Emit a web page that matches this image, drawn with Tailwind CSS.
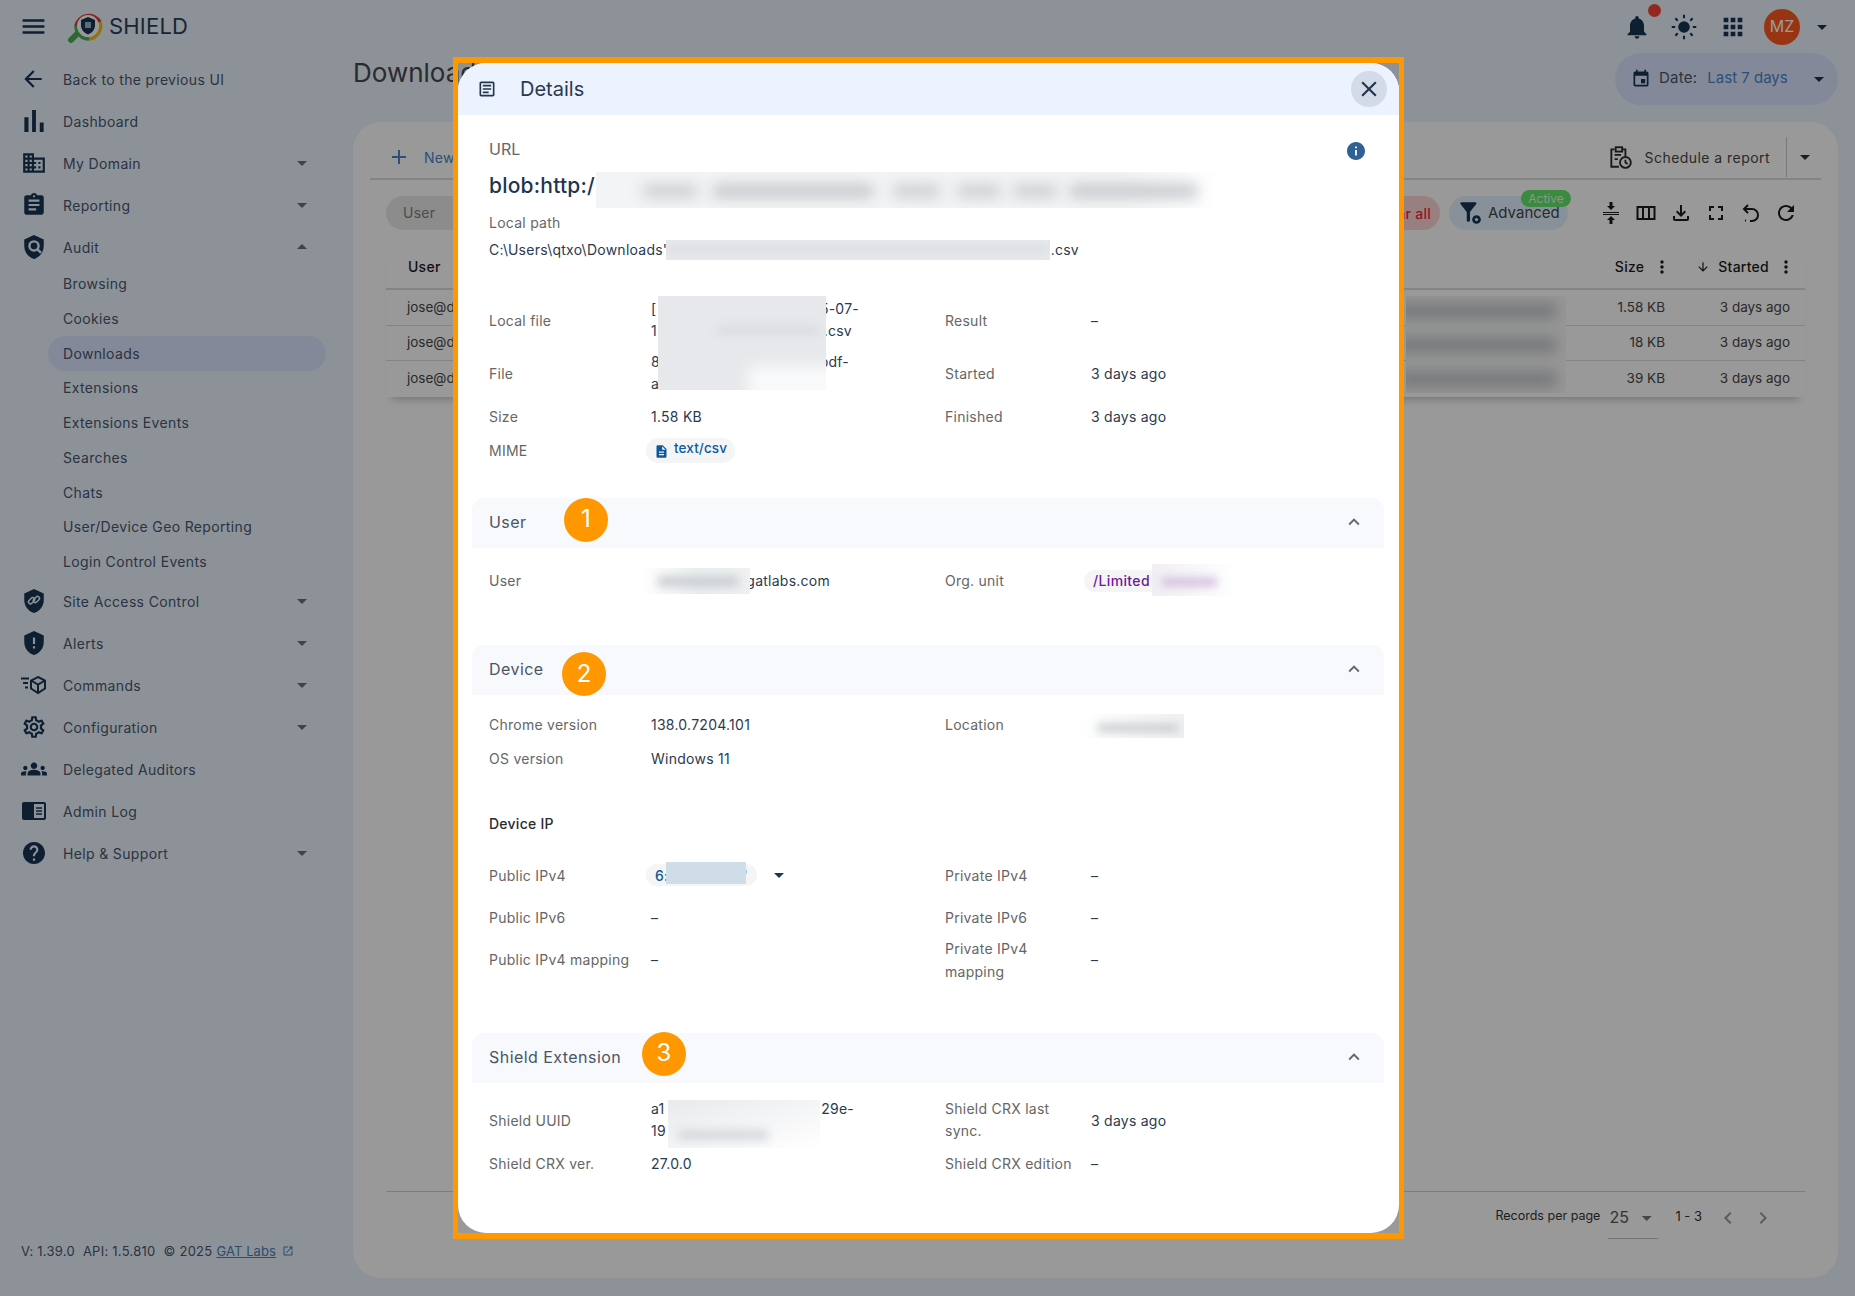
<!DOCTYPE html>
<html lang="en">
  <head>
    <meta charset="UTF-8" />
    <meta name="viewport" content="width=device-width, initial-scale=1.0" />
    <title>Shield - Downloads</title>
    <script src="https://cdn.jsdelivr.net/npm/@tailwindcss/browser@4"></script>
  </head>
  <body class="font-['Inter',sans-serif] text-[14px] tracking-[0.25px]">
    <div class="relative w-[1855px] h-[1296px] overflow-hidden bg-[#ebf3ff]">
      <!-- Top bar -->
      <header class="h-[53px] flex items-center text-[#173452]">
        <svg viewBox="0 0 24 24" class="ml-[19px] w-[29px] h-[29px] fill-current"><path d="M3 18h18v-2H3v2zm0-5h18v-2H3v2zm0-7v2h18V6H3z"/></svg>
        <svg viewBox="0 0 36 36" class="ml-[19px] w-[36px] h-[36px] shrink-0">
          <path d="M11 24 L4 31" stroke="#4caf50" stroke-width="6" stroke-linecap="round" fill="none"/>
          <path d="M9 17 A13 13 0 0 1 33 13" stroke="#e53935" stroke-width="3.5" fill="none"/>
          <path d="M33 13 A13 13 0 0 1 22 30" stroke="#f4c20d" stroke-width="3.5" fill="none"/>
          <path d="M22 30 A13 13 0 0 1 9 17" stroke="#4caf50" stroke-width="3.5" fill="none"/>
          <circle cx="21" cy="17" r="11" fill="#fff"/>
          <path d="M21 8l-7 3v5c0 4.5 3 8 7 9.5 4-1.500 7-5 7-9.500v-5z" fill="#173452"/>
          <rect x="18" y="13" width="6" height="6" fill="#9fb4c8"/>
        </svg>
        <span class="ml-[6px] mb-[1px] text-[22px] tracking-[0.2px] text-[#2b3f55]">SHIELD</span>
        <div class="ml-auto flex items-center">
          <div class="relative w-[24px] h-[34px] flex items-center justify-center">
            <svg viewBox="0 0 24 24" class="w-[28px] h-[28px] shrink-0 fill-current"><path d="M12 22c1.100 0 2-.9 2-2h-4c0 1.100.9 2 2 2zm6-6v-5c0-3.070-1.630-5.640-4.500-6.320V4c0-.83-.67-1.500-1.500-1.500s-1.500.67-1.500 1.500v.68C7.640 5.360 6 7.920 6 11v5l-2 2v1h16v-1l-2-2z"/></svg>
            <span class="absolute left-[23px] top-[-6px] w-[13px] h-[13px] rounded-full bg-[#f44336]"></span>
          </div>
          <svg viewBox="0 0 24 24" class="ml-[21px] w-[28px] h-[28px] fill-current"><circle cx="12" cy="12" r="5"/><path d="M12 1.500v3M12 19.500v3M1.500 12h3M19.500 12h3M4.600 4.600l2 2M17.400 17.400l2 2M4.600 19.400l2-2M17.400 6.600l2-2" stroke="currentColor" stroke-width="1.800" fill="none"/></svg>
          <svg viewBox="0 0 24 24" class="ml-[21px] w-[28px] h-[28px] fill-current"><path d="M4 8h4V4H4v4zm6 12h4v-4h-4v4zm-6 0h4v-4H4v4zm0-6h4v-4H4v4zm6 0h4v-4h-4v4zm6-10v4h4V4h-4zm-6 4h4V4h-4v4zm6 6h4v-4h-4v4zm0 6h4v-4h-4v4z"/></svg>
          <div class="ml-[17px] w-[36px] h-[36px] rounded-full bg-[#ff581e] text-white text-[16px] tracking-normal flex items-center justify-center pb-[2px]">MZ</div>
          <svg viewBox="0 0 24 24" class="ml-[10px] mr-[21px] w-[24px] h-[24px] fill-current"><path d="M7 10l5 5 5-5z"/></svg>
        </div>
      </header>

      <div class="flex">
        <!-- Sidebar -->
        <aside class="w-[353px] h-[1243px] shrink-0 relative text-[#48576b] tracking-[0.35px]">
          <nav class="pt-[5px]">
            <a class="flex items-center h-[42px]">
              <span class="w-[63px] flex justify-center text-[#173452] pl-[3px]"><svg viewBox="0 0 24 24" class="w-[26px] h-[26px] fill-current"><path d="M20 11H7.830l5.590-5.590L12 4l-8 8 8 8 1.410-1.410L7.830 13H20v-2z"/></svg></span>
              Back to the previous UI
            </a>
            <a class="flex items-center h-[42px]">
              <span class="w-[63px] flex justify-center text-[#173452] pl-[4px]"><svg viewBox="4 4 16 16" class="w-[22px] h-[22px] fill-current"><path d="M5 9.200h3V20H5zM10.600 4h2.800v16h-2.800zm5.600 9H19v7h-2.800z"/></svg></span>
              Dashboard
            </a>
            <a class="flex items-center h-[42px]">
              <span class="w-[63px] flex justify-center text-[#173452] pl-[4px]"><svg viewBox="0 0 24 24" class="w-[26px] h-[26px] fill-current"><path d="M12 7V3H2v18h20V7H12zM6 19H4v-2h2v2zm0-4H4v-2h2v2zm0-4H4V9h2v2zm0-4H4V5h2v2zm4 12H8v-2h2v2zm0-4H8v-2h2v2zm0-4H8V9h2v2zm0-4H8V5h2v2zm10 12h-8v-2h2v-2h-2v-2h2v-2h-2V9h8v10zm-2-8h-2v2h2v-2zm0 4h-2v2h2v-2z"/></svg></span>
              My Domain
              <svg viewBox="0 0 24 24" class="ml-auto mr-[39px] w-[24px] h-[24px] fill-[#6e6e6e]"><path d="M7 10l5 5 5-5z"/></svg>
            </a>
            <a class="flex items-center h-[42px]">
              <span class="w-[63px] flex justify-center text-[#173452] pl-[4px]"><svg viewBox="0 0 24 24" class="w-[26px] h-[26px] fill-current"><path d="M19 3h-4.180C14.400 1.840 13.300 1 12 1c-1.300 0-2.400.84-2.820 2H5c-1.100 0-2 .9-2 2v14c0 1.100.9 2 2 2h14c1.100 0 2-.9 2-2V5c0-1.100-.9-2-2-2zm-7 0c.55 0 1 .45 1 1s-.45 1-1 1-1-.45-1-1 .45-1 1-1zm2 14H7v-2h7v2zm3-4H7v-2h10v2zm0-4H7V7h10v2z"/></svg></span>
              Reporting
              <svg viewBox="0 0 24 24" class="ml-auto mr-[39px] w-[24px] h-[24px] fill-[#6e6e6e]"><path d="M7 10l5 5 5-5z"/></svg>
            </a>
            <a class="flex items-center h-[42px]">
              <span class="w-[63px] flex justify-center text-[#173452] pl-[4px]"><svg viewBox="0 0 24 24" class="w-[26px] h-[26px] fill-current"><path d="M12 1L3 5v6c0 5.550 3.840 10.740 9 12 5.160-1.260 9-6.450 9-12V5l-9-4z"/><circle cx="12" cy="11" r="4.200" fill="none" stroke="#ebf3ff" stroke-width="2.200"/><path d="M15 14l3.500 3.500" stroke="#ebf3ff" stroke-width="2.200"/></svg></span>
              Audit
              <svg viewBox="0 0 24 24" class="ml-auto mr-[39px] w-[24px] h-[24px] fill-[#6e6e6e]"><path d="M7 14l5-5 5 5z"/></svg>
            </a>
            <div class="mt-[-2px] mb-[1px] text-[14px]">
              <a class="flex items-center h-[34.750px] pl-[63px]">Browsing</a>
              <a class="flex items-center h-[34.750px] pl-[63px]">Cookies</a>
              <a class="flex items-center h-[35px] pl-[15px] ml-[48px] w-[278px] rounded-full bg-[#dae4fd]">Downloads</a>
              <a class="flex items-center h-[34.750px] pl-[63px]">Extensions</a>
              <a class="flex items-center h-[34.750px] pl-[63px]">Extensions Events</a>
              <a class="flex items-center h-[34.750px] pl-[63px]">Searches</a>
              <a class="flex items-center h-[34.750px] pl-[63px]">Chats</a>
              <a class="flex items-center h-[34.750px] pl-[63px]">User/Device Geo Reporting</a>
              <a class="flex items-center h-[34.750px] pl-[63px]">Login Control Events</a>
            </div>
            <a class="flex items-center h-[42px]">
              <span class="w-[63px] flex justify-center text-[#173452] pl-[4px]"><svg viewBox="0 0 24 24" class="w-[26px] h-[26px] fill-current"><path d="M12 1L3 5v6c0 5.550 3.840 10.740 9 12 5.160-1.260 9-6.450 9-12V5l-9-4z"/><rect x="6.500" y="10" width="6.500" height="3.600" rx="1.800" transform="rotate(-45 9.700 11.800)" fill="none" stroke="#ebf3ff" stroke-width="1.400"/><rect x="11" y="8.800" width="6.500" height="3.600" rx="1.800" transform="rotate(-45 14.200 10.600)" fill="none" stroke="#ebf3ff" stroke-width="1.400"/></svg></span>
              Site Access Control
              <svg viewBox="0 0 24 24" class="ml-auto mr-[39px] w-[24px] h-[24px] fill-[#6e6e6e]"><path d="M7 10l5 5 5-5z"/></svg>
            </a>
            <a class="flex items-center h-[42px]">
              <span class="w-[63px] flex justify-center text-[#173452] pl-[4px]"><svg viewBox="0 0 24 24" class="w-[26px] h-[26px] fill-current"><path d="M12 1L3 5v6c0 5.550 3.840 10.740 9 12 5.160-1.260 9-6.450 9-12V5l-9-4zm1 16h-2v-2h2v2zm0-4h-2V7h2v6z"/></svg></span>
              Alerts
              <svg viewBox="0 0 24 24" class="ml-auto mr-[39px] w-[24px] h-[24px] fill-[#6e6e6e]"><path d="M7 10l5 5 5-5z"/></svg>
            </a>
            <a class="flex items-center h-[42px]">
              <span class="w-[63px] flex justify-center text-[#173452] pl-[4px]"><svg viewBox="0 0 26 20" class="w-[26px] h-[20px] fill-none stroke-current"><path d="M17 2l7 3.500v8L17 18l-7-4.500v-8zM10 5.500l7 4 7-4M17 9.500V18" stroke-width="2"/><path d="M0 3.500h8M2 8h5M4 12.500h3" stroke-width="2"/></svg></span>
              Commands
              <svg viewBox="0 0 24 24" class="ml-auto mr-[39px] w-[24px] h-[24px] fill-[#6e6e6e]"><path d="M7 10l5 5 5-5z"/></svg>
            </a>
            <a class="flex items-center h-[42px]">
              <span class="w-[63px] flex justify-center text-[#173452] pl-[4px]"><svg viewBox="0 0 24 24" class="w-[26px] h-[26px] fill-current"><path d="M19.430 12.980c.04-.32.07-.64.07-.98 0-.34-.03-.66-.07-.98l2.110-1.650c.19-.15.24-.42.12-.64l-2-3.460c-.09-.16-.26-.25-.44-.25-.06 0-.12.01-.17.03l-2.490 1c-.52-.4-1.080-.73-1.690-.98l-.38-2.650C14.460 2.180 14.250 2 14 2h-4c-.25 0-.46.18-.49.42l-.38 2.650c-.61.25-1.170.59-1.690.98l-2.490-1c-.06-.02-.12-.03-.18-.03-.17 0-.34.09-.43.25l-2 3.460c-.13.22-.07.49.12.64l2.110 1.650c-.04.32-.07.65-.07.98 0 .33.03.66.07.98l-2.110 1.650c-.19.15-.24.42-.12.64l2 3.460c.09.16.26.25.44.25.06 0 .12-.01.17-.03l2.490-1c.52.4 1.080.73 1.690.98l.38 2.650c.03.24.24.42.49.42h4c.25 0 .46-.18.49-.42l.38-2.650c.61-.25 1.170-.59 1.690-.98l2.490 1c.06.02.12.03.18.03.17 0 .34-.09.43-.25l2-3.460c.12-.22.07-.49-.12-.64l-2.110-1.650zm-1.980-1.710c.04.31.05.52.05.73 0 .21-.02.43-.05.73l-.14 1.130.89.7 1.080.84-.7 1.210-1.270-.51-1.040-.42-.9.68c-.43.32-.84.56-1.250.73l-1.060.43-.16 1.130-.2 1.350h-1.400l-.19-1.350-.16-1.130-1.060-.43c-.43-.18-.83-.41-1.230-.71l-.91-.7-1.060.43-1.270.51-.7-1.210 1.080-.84.89-.7-.14-1.130c-.03-.31-.05-.54-.05-.74s.02-.43.05-.73l.14-1.130-.89-.7-1.080-.84.7-1.210 1.270.51 1.040.42.9-.68c.43-.32.84-.56 1.250-.73l1.060-.43.16-1.130.2-1.350h1.390l.19 1.350.16 1.130 1.060.43c.43.18.83.41 1.230.71l.91.7 1.060-.43 1.270-.51.7 1.210-1.070.85-.89.7.14 1.130zM12 8c-2.210 0-4 1.790-4 4s1.790 4 4 4 4-1.790 4-4-1.790-4-4-4zm0 6c-1.100 0-2-.9-2-2s.9-2 2-2 2 .9 2 2-.9 2-2 2z"/></svg></span>
              Configuration
              <svg viewBox="0 0 24 24" class="ml-auto mr-[39px] w-[24px] h-[24px] fill-[#6e6e6e]"><path d="M7 10l5 5 5-5z"/></svg>
            </a>
            <a class="flex items-center h-[42px]">
              <span class="w-[63px] flex justify-center text-[#173452] pl-[4px]"><svg viewBox="0 0 24 24" class="w-[26px] h-[26px] fill-current"><path d="M12 12.750c1.630 0 3.070.39 4.240.9 1.080.48 1.760 1.560 1.760 2.740V18H6v-1.610c0-1.180.68-2.260 1.760-2.740 1.170-.52 2.610-.9 4.240-.9zM4 13c1.100 0 2-.9 2-2s-.9-2-2-2-2 .9-2 2 .9 2 2 2zm1.130 1.100c-.37-.06-.74-.1-1.130-.1-.99 0-1.930.21-2.780.58C.48 14.900 0 15.620 0 16.430V18h4.500v-1.610c0-.83.23-1.610.63-2.290zM20 13c1.100 0 2-.9 2-2s-.9-2-2-2-2 .9-2 2 .9 2 2 2zm4 3.430c0-.81-.48-1.530-1.220-1.850-.85-.37-1.790-.58-2.780-.58-.39 0-.76.04-1.130.1.4.68.63 1.460.63 2.290V18H24v-1.570zM12 6c1.660 0 3 1.340 3 3s-1.340 3-3 3-3-1.340-3-3 1.340-3 3-3z"/></svg></span>
              Delegated Auditors
            </a>
            <a class="flex items-center h-[42px]">
              <span class="w-[63px] flex justify-center text-[#173452] pl-[4px]"><svg viewBox="0 0 24 18" class="w-[24px] h-[18px]"><rect width="24" height="18" rx="2" fill="currentColor"/><rect x="12" y="2" width="10" height="14" fill="#ebf3ff"/><path d="M14 6h6M14 9h6M14 12h6" stroke="currentColor" stroke-width="1.300"/></svg></span>
              Admin Log
            </a>
            <a class="flex items-center h-[42px]">
              <span class="w-[63px] flex justify-center text-[#173452] pl-[4px]"><svg viewBox="2 2 20 20" class="w-[22px] h-[22px] fill-current"><path d="M12 2C6.480 2 2 6.480 2 12s4.480 10 10 10 10-4.480 10-10S17.520 2 12 2zm1 17h-2v-2h2v2zm2.070-7.750l-.9.92C13.450 12.900 13 13.500 13 15h-2v-.5c0-1.100.45-2.100 1.170-2.830l1.240-1.260c.37-.36.59-.86.59-1.410 0-1.100-.9-2-2-2s-2 .9-2 2H8c0-2.210 1.790-4 4-4s4 1.790 4 4c0 .88-.36 1.680-.93 2.250z"/></svg></span>
              Help &amp; Support
              <svg viewBox="0 0 24 24" class="ml-auto mr-[39px] w-[24px] h-[24px] fill-[#6e6e6e]"><path d="M7 10l5 5 5-5z"/></svg>
            </a>
          </nav>
          <footer class="absolute left-[21px] top-[1188px] flex items-center gap-[8px] text-[13px] tracking-[0.25px] leading-[20px] text-[#48576b]">
            <span>V: 1.39.0</span><span>API: 1.5.810</span>
            <span class="flex items-center gap-[4px]">© 2025
              <a class="text-[#4b7fb8] underline tracking-[0.1px]">GAT Labs</a>
              <svg viewBox="0 0 24 24" class="ml-[2px] w-[12px] h-[12px] fill-[#4b7fb8]"><path d="M19 19H5V5h7V3H5c-1.110 0-2 .9-2 2v14c0 1.100.89 2 2 2h14c1.100 0 2-.9 2-2v-7h-2v7zM14 3v2h3.590l-9.830 9.830 1.410 1.410L19 6.410V10h2V3h-7z"/></svg>
            </span>
          </footer>
        </aside>

        <!-- Main -->
        <main class="flex-1 pr-[17px]">
          <div class="h-[69px] flex justify-between items-start">
            <h1 class="text-[26px] tracking-normal leading-[40px] text-[#484848]">Downloads</h1>
            <div class="w-[223px] h-[52px] rounded-full bg-[#dae4fd] flex items-center text-[15px] text-[#48576b] pb-[1px]">
              <svg viewBox="0 0 24 24" class="ml-[16px] w-[20px] h-[20px] fill-[#173452]"><path d="M17 12h-5v5h5v-5zM16 1v2H8V1H6v2H5c-1.110 0-1.990.9-1.990 2L3 19c0 1.100.89 2 2 2h14c1.100 0 2-.9 2-2V5c0-1.100-.9-2-2-2h-1V1h-2zm3 18H5V8h14v11z"/></svg>
              <span class="ml-[8px]">Date:</span>
              <span class="ml-[10px] tracking-normal text-[#4b85c8]">Last 7 days</span>
              <svg viewBox="0 0 24 24" class="ml-[19px] w-[24px] h-[24px] fill-[#173452]"><path d="M7 10l5 5 5-5z"/></svg>
            </div>
          </div>

          <section class="h-[1156px] rounded-[28px] bg-white px-[17px] text-[#464646]">
            <!-- Tabs row -->
            <div class="h-[58px] border-b-2 border-[#dcdcdc] flex items-center pt-[14px]">
              <svg viewBox="0 0 24 24" class="ml-[17px] w-[24px] h-[24px] fill-[#4b85c8]"><path d="M19 13h-6v6h-2v-6H5v-2h6V5h2v6h6v2z"/></svg>
              <span class="ml-[13px] text-[#4b85c8]">New</span>
              <div class="ml-auto flex items-center h-[40px]">
                <svg viewBox="0 0 24 24" class="w-[26px] h-[26px] fill-none stroke-[#2a2a2a]" stroke-width="1.700"><path d="M17 11V5h-3M7 5H4v16h7"/><rect x="8" y="3" width="6" height="4"/><path d="M7 10h6M7 14h3"/><circle cx="17" cy="17" r="5"/><path d="M17 14.500V17l2 1.500"/></svg>
                <span class="ml-[12px] tracking-[0.45px]">Schedule a report</span>
                <span class="ml-[16px] w-px h-[40px] bg-[#c8c8c8]"></span>
                <svg viewBox="0 0 24 24" class="ml-[6px] mr-[4px] w-[24px] h-[24px] fill-[#333]"><path d="M7 10l5 5 5-5z"/></svg>
              </div>
            </div>
            <!-- Filters row -->
            <div class="mt-[16px] h-[34px] flex items-center pl-[16px] pr-[23px]">
              <span class="h-[34px] rounded-full bg-[#e9e9e9] px-[17px] flex items-center text-[#808080] w-[120px] pb-[1px]">User</span>
              <span class="ml-auto h-[34px] pl-[12px] pr-[9px] rounded-full bg-[#ffd6d6] flex items-center font-medium text-[#ff1a40]">Clear all</span>
              <span class="relative ml-[9px] h-[34px] w-[119px] rounded-full bg-[#e3f2ff] flex items-center text-[15px] tracking-normal text-[#464646]">
                <svg viewBox="0 0 24 24" class="ml-[8px] w-[26px] h-[26px] fill-[#173452]"><path d="M3.250 3.610C5.270 6.200 9 11 9 11v8c0 .55.45 1 1 1h1c.55 0 1-.45 1-1v-8s3.720-4.800 5.740-7.390c.51-.66.04-1.610-.79-1.610H4.040c-.83 0-1.300.95-.79 1.610z"/><circle cx="18" cy="18" r="4"/><circle cx="18" cy="18" r="1.500" fill="#e3f2ff"/></svg>
                <span class="ml-[5px]">Advanced</span>
                <span class="absolute left-[72px] top-[-6px] h-[17px] w-[50px] rounded-full bg-[#62e669] text-[#dcffe0] text-[12px] tracking-normal flex items-center justify-center">Active</span>
              </span>
              <div class="ml-[31px] flex items-center gap-[11px] text-[#1c1c1c]">
                <svg viewBox="0 0 24 24" class="w-[24px] h-[24px] fill-current"><path d="M4 11h16v1H4zM4 13h16v1H4zM10.500 1v4H8l4 4 4-4h-2.500V1zM12 15l-4 4h2.500v4h3v-4H16z"/></svg>
                <svg viewBox="0 0 24 24" class="w-[24px] h-[24px] fill-none stroke-current" stroke-width="2"><rect x="3.500" y="6" width="17" height="12"/><path d="M9 6v12M15 6v12"/></svg>
                <svg viewBox="0 0 24 24" class="w-[24px] h-[24px] fill-current"><path d="M18 15v3H6v-3H4v3c0 1.100.9 2 2 2h12c1.100 0 2-.9 2-2v-3h-2zm-1-4l-1.410-1.410L13 12.170V4h-2v8.170L8.410 9.590 7 11l5 5 5-5z"/></svg>
                <svg viewBox="0 0 24 24" class="w-[24px] h-[24px] fill-current"><path d="M7 14H5v5h5v-2H7v-3zm-2-4h2V7h3V5H5v5zm12 7h-3v2h5v-5h-2v3zM14 5v2h3v3h2V5h-5z"/></svg>
                <svg viewBox="0 0 24 24" class="w-[24px] h-[24px] fill-none stroke-current" stroke-width="2"><path d="M9 4L5 8l4 4"/><path d="M5 8h8a6 6 0 0 1 0 12h-2M6 19.500h1"/></svg>
                <svg viewBox="0 0 24 24" class="w-[24px] h-[24px] fill-current"><path d="M17.650 6.350C16.200 4.900 14.210 4 12 4c-4.420 0-7.990 3.580-7.990 8s3.570 8 7.990 8c3.730 0 6.840-2.550 7.730-6h-2.080c-.82 2.330-3.040 4-5.650 4-3.310 0-6-2.690-6-6s2.690-6 6-6c1.660 0 3.140.69 4.220 1.780L13 11h7V4l-2.350 2.350z"/></svg>
              </div>
            </div>
            <!-- Table -->
            <div class="relative mx-[16px] mt-[16px] shadow-[0_8px_8px_-6px_rgba(0,0,0,0.25)]">
              <div class="h-[44px] pb-[1px] border-b-2 border-[#dcdcdc] flex items-center text-[#1c1c1c] font-medium">
                <span class="ml-[22px]">User</span>
                <span class="ml-auto">Size</span>
                <svg viewBox="0 0 24 24" class="ml-[8px] w-[20px] h-[20px] fill-current"><path d="M12 8c1.100 0 2-.9 2-2s-.9-2-2-2-2 .9-2 2 .9 2 2 2zm0 2c-1.100 0-2 .9-2 2s.9 2 2 2 2-.9 2-2-.9-2-2-2zm0 6c-1.100 0-2 .9-2 2s.9 2 2 2 2-.9 2-2-.9-2-2-2z"/></svg>
                <svg viewBox="0 0 24 24" class="ml-[24px] w-[14px] h-[14px] fill-current"><path d="M20 12l-1.410-1.410L13 16.170V4h-2v12.170l-5.580-5.590L4 12l8 8 8-8z"/></svg>
                <span class="ml-[8px]">Started</span>
                <svg viewBox="0 0 24 24" class="ml-[7px] mr-[9px] w-[20px] h-[20px] fill-current"><path d="M12 8c1.100 0 2-.9 2-2s-.9-2-2-2-2 .9-2 2 .9 2 2 2zm0 2c-1.100 0-2 .9-2 2s.9 2 2 2 2-.9 2-2-.9-2-2-2zm0 6c-1.100 0-2 .9-2 2s.9 2 2 2 2-.9 2-2-.9-2-2-2z"/></svg>
              </div>
              <div class="h-[35.500px] pb-[1px] border-b border-[#dcdcdc] flex items-center text-[13.500px] tracking-normal"><span class="ml-[21px]">jose@do</span><span class="ml-auto">1.58 KB</span><span class="w-[125px] mr-[15px] text-right">3 days ago</span></div>
              <div class="h-[35.500px] pb-[1px] border-b border-[#dcdcdc] flex items-center text-[13.500px] tracking-normal"><span class="ml-[21px]">jose@do</span><span class="ml-auto">18 KB</span><span class="w-[125px] mr-[15px] text-right">3 days ago</span></div>
              <div class="h-[36px] pb-[1px] flex items-center text-[13.500px] tracking-normal"><span class="ml-[21px]">jose@do</span><span class="ml-auto">39 KB</span><span class="w-[125px] mr-[15px] text-right">3 days ago</span></div>
              <div class="absolute left-[1020px] top-[50px] w-[160px] h-[97px] bg-[#fafafa] overflow-hidden">
                <div class="absolute left-[-10px] top-[8px] w-[160px] h-[14px] bg-gray-500/40 blur-[7px]"></div>
                <div class="absolute left-[-10px] top-[42px] w-[160px] h-[14px] bg-gray-500/40 blur-[7px]"></div>
                <div class="absolute left-[-10px] top-[76px] w-[160px] h-[14px] bg-gray-500/40 blur-[7px]"></div>
              </div>
            </div>
            <!-- Pagination -->
            <div class="mt-[794px] border-t border-[#d0d0d0] mx-[16px] flex items-start pt-[14px] pr-[30px] justify-end text-[12.500px] tracking-normal text-[#333]">
              <span class="mt-[1px]">Records per page</span>
              <div class="ml-[8px] w-[50px] h-[33px] border-b border-[#c0c0c0] flex items-start">
                <span class="text-[16px] text-[#555] mt-[-1px] ml-[1px]">25</span>
                <svg viewBox="0 0 24 24" class="ml-[6px] w-[24px] h-[24px] fill-[#777]"><path d="M7 10l5 5 5-5z"/></svg>
              </div>
              <span class="ml-[17px] mt-[1px] text-[13px]">1 - 3</span>
              <svg viewBox="0 0 24 24" class="ml-[14px] w-[24px] h-[24px] fill-[#999]"><path d="M15.410 7.410L14 6l-6 6 6 6 1.410-1.410L10.830 12z"/></svg>
              <svg viewBox="0 0 24 24" class="ml-[11px] w-[24px] h-[24px] fill-[#999]"><path d="M10 6L8.590 7.410 13.170 12l-4.580 4.590L10 18l6-6z"/></svg>
            </div>
          </section>
        </main>
      </div>

      <!-- Backdrop -->
      <div class="absolute inset-0 bg-black/40"></div>

      <!-- Details dialog with orange highlight frame -->
      <div class="absolute left-[453px] top-[57px] w-[951px] h-[1182px] border-x-[5px] border-y-[6px] border-[#ff9800]">
        <div class="relative w-[941px] h-[1170px] rounded-[28px] bg-white overflow-hidden text-[#2a3a4f]">
          <div class="h-[52px] bg-[#ecf2fe] flex items-center pr-[12px]">
            <svg viewBox="0 0 24 24" class="ml-[19px] w-[20px] h-[20px] fill-[#22364d]"><path d="M19 5v14H5V5h14m0-2H5c-1.100 0-2 .9-2 2v14c0 1.100.9 2 2 2h14c1.100 0 2-.9 2-2V5c0-1.100-.9-2-2-2z"/><path d="M14 17H7v-2h7v2zm3-4H7v-2h10v2zm0-4H7V7h10v2z"/></svg>
            <span class="ml-[23px] text-[20px] tracking-normal text-[#2a3a4f]">Details</span>
            <button class="ml-auto w-[36px] h-[36px] rounded-full bg-[#d4dbe8] flex items-center justify-center">
              <svg viewBox="0 0 24 24" class="w-[26px] h-[26px] fill-[#22364d]"><path d="M19 6.410L17.590 5 12 10.590 6.410 5 5 6.410 10.590 12 5 17.590 6.410 19 12 13.410 17.590 19 19 17.590 13.410 12z"/></svg>
            </button>
          </div>

          <div class="pl-[31px]">
            <div class="mt-[22px] h-[24px] leading-[24px] flex items-center text-[16px] tracking-normal text-[#666]">URL
              <svg viewBox="2 2 20 20" class="ml-auto mr-[34px] mt-[4px] w-[18px] h-[18px] fill-[#2f6195]"><path d="M12 2C6.480 2 2 6.480 2 12s4.480 10 10 10 10-4.480 10-10S17.520 2 12 2zm1 15h-2v-6h2v6zm0-8h-2V7h2v2z"/></svg>
            </div>
            <div class="mt-[10px] h-[30px] leading-[30px] text-[21px] tracking-[0.2px] font-medium text-[#1e3550]">blob:http:/</div>
            <div class="mt-[10px] h-[24px] leading-[24px] text-[#666]">Local path</div>
            <div class="mt-[3px] h-[24px] leading-[24px] w-[590px] flex justify-between text-[#2a3a4f]"><span>C:\Users\qtxo\Downloads'</span><span>.csv</span></div>
          </div>

          <div class="mt-[31.500px] pl-[31px]">
            <div class="flex h-[53px] items-center">
              <div class="flex items-center w-[456px]"><span class="w-[162px] text-[#666]">Local file</span><div class="leading-[22.500px]"><div class="w-[208px] flex justify-between"><span>[</span><span>5-07-</span></div><div class="w-[201px] flex justify-between"><span>1</span><span>.csv</span></div></div></div>
              <span class="w-[146px] text-[#666]">Result</span><span>–</span>
            </div>
            <div class="flex h-[53px] items-center">
              <div class="flex items-center w-[456px]"><span class="w-[162px] text-[#666]">File</span><div class="leading-[22.500px]"><div class="w-[198px] flex justify-between"><span>8</span><span>pdf-</span></div><div>a</div></div></div>
              <span class="w-[146px] text-[#666]">Started</span><span>3 days ago</span>
            </div>
            <div class="flex h-[34px] items-center">
              <div class="flex items-center w-[456px]"><span class="w-[162px] text-[#666]">Size</span><span>1.58 KB</span></div>
              <span class="w-[146px] text-[#666]">Finished</span><span>3 days ago</span>
            </div>
            <div class="flex h-[34px] items-center">
              <span class="w-[157px] text-[#666]">MIME</span>
              <span class="h-[25px] w-[89px] rounded-full bg-[#f5f5f5] flex items-center pl-[8px] text-[13.500px] tracking-[0.1px] font-medium text-[#0b5a9e] pb-[4px]">
                <svg viewBox="0 0 24 24" class="w-[15px] h-[15px] mt-[6px] mr-[5px] shrink-0 fill-[#0b5a9e]"><path d="M14 2H6c-1.100 0-1.990.9-1.990 2L4 20c0 1.100.89 2 1.990 2H18c1.100 0 2-.9 2-2V8l-6-6zm2 16H8v-2h8v2zm0-4H8v-2h8v2zm-3-5V3.500L18.500 9H13z"/></svg>
                text/csv
              </span>
            </div>
          </div>

          <!-- User -->
          <div class="mt-[30px] ml-[14px] mr-[15px] h-[50px] rounded-t-[12px] bg-[#f7f9fd] flex items-center pl-[17px] pr-[19px] pb-[2px] text-[16px] tracking-[0.45px] text-[#4b5563]">User
            <svg viewBox="0 0 24 24" class="ml-auto mt-[1px] w-[22px] h-[22px] fill-[#666]"><path d="M12 8l-6 6 1.410 1.410L12 10.830l4.590 4.580L18 14z"/></svg>
          </div>
          <div class="pl-[31px] mt-[16px] flex h-[34px] items-center">
            <div class="flex items-center w-[456px]"><span class="w-[162px] text-[#666]">User</span><span class="w-[179px] text-right">gatlabs.com</span></div>
            <span class="w-[139px] text-[#666]">Org. unit</span>
            <span class="h-[22px] w-[90px] rounded-l-full bg-[#f5f5f5] flex items-center pl-[9px] tracking-[0.35px] font-medium text-[#6a1b9a]">/Limited</span>
          </div>

          <!-- Device -->
          <div class="mt-[47px] ml-[14px] mr-[15px] h-[50px] rounded-t-[12px] bg-[#f7f9fd] flex items-center pl-[17px] pr-[19px] pb-[2px] text-[16px] tracking-[0.45px] text-[#4b5563]">Device
            <svg viewBox="0 0 24 24" class="ml-auto mt-[1px] w-[22px] h-[22px] fill-[#666]"><path d="M12 8l-6 6 1.410 1.410L12 10.830l4.590 4.580L18 14z"/></svg>
          </div>
          <div class="pl-[31px] mt-[13px]">
            <div class="flex h-[34px] items-center">
              <div class="flex items-center w-[456px]"><span class="w-[162px] text-[#666]">Chrome version</span><span>138.0.7204.101</span></div>
              <span class="text-[#666]">Location</span>
            </div>
            <div class="flex h-[34px] items-center">
              <span class="w-[162px] text-[#666]">OS version</span><span>Windows 11</span>
            </div>
            <div class="mt-[36.500px] h-[24px] leading-[24px] font-medium text-[#2b2b2b]">Device IP</div>
            <div class="mt-[14px] flex h-[50px] items-center">
              <div class="flex items-center w-[456px]"><span class="w-[157px] text-[#666]">Public IPv4</span>
                <span class="h-[22px] w-[111px] rounded-full bg-[#f5f5f5] flex items-center justify-between px-[9px] font-medium text-[#0b5a9e]"><span>6:</span><span>'</span></span>
                <svg viewBox="0 0 24 24" class="ml-[10px] w-[24px] h-[24px] fill-[#22364d]"><path d="M7 10l5 5 5-5z"/></svg>
              </div>
              <span class="w-[146px] text-[#666]">Private IPv4</span><span>–</span>
            </div>
            <div class="flex h-[34px] items-center">
              <div class="flex items-center w-[456px]"><span class="w-[162px] text-[#666]">Public IPv6</span><span>–</span></div>
              <span class="w-[146px] text-[#666]">Private IPv6</span><span>–</span>
            </div>
            <div class="flex h-[53px] items-center">
              <div class="flex items-center w-[456px] mb-[3px]"><span class="w-[162px] text-[#666]">Public IPv4 mapping</span><span>–</span></div>
              <span class="w-[146px] text-[#666] leading-[22.500px]">Private IPv4 mapping</span><span class="mb-[3px]">–</span>
            </div>
          </div>

          <!-- Shield Extension -->
          <div class="mt-[45.500px] ml-[14px] mr-[15px] h-[50px] rounded-t-[12px] bg-[#f7f9fd] flex items-center pl-[17px] pr-[19px] pb-[2px] text-[16px] tracking-[0.45px] text-[#4b5563]">Shield Extension
            <svg viewBox="0 0 24 24" class="ml-auto mt-[1px] w-[22px] h-[22px] fill-[#666]"><path d="M12 8l-6 6 1.410 1.410L12 10.830l4.590 4.580L18 14z"/></svg>
          </div>
          <div class="pl-[31px] mt-[11px]">
            <div class="flex h-[53px] items-center">
              <div class="flex items-center w-[456px]"><span class="w-[162px] text-[#666]">Shield UUID</span><div class="leading-[22.500px]"><div class="w-[203px] flex justify-between"><span>a1</span><span>29e-</span></div><div>19</div></div></div>
              <span class="w-[146px] pr-[20px] text-[#666] leading-[22.500px]">Shield CRX last sync.</span><span>3 days ago</span>
            </div>
            <div class="flex h-[34px] items-center">
              <div class="flex items-center w-[456px]"><span class="w-[162px] text-[#666]">Shield CRX ver.</span><span>27.0.0</span></div>
              <span class="w-[146px] text-[#666]">Shield CRX edition</span><span>–</span>
            </div>
          </div>

          <!-- Redaction blurs laid over the values -->
          <div class="absolute left-[138px] top-[109px] w-[624px] h-[36px] overflow-hidden bg-gradient-to-r from-[#f3f4f5] from-85% to-white">
            <div class="absolute left-[47px] top-[12px] w-[54px] h-[14px] bg-[#cdd0d4] blur-[7px]"></div>
            <div class="absolute left-[117px] top-[12px] w-[160px] h-[14px] bg-[#c6c9ce] blur-[7px]"></div>
            <div class="absolute left-[297px] top-[12px] w-[47px] h-[14px] bg-[#cdd0d4] blur-[7px]"></div>
            <div class="absolute left-[361px] top-[12px] w-[43px] h-[14px] bg-[#cdd0d4] blur-[7px]"></div>
            <div class="absolute left-[417px] top-[12px] w-[44px] h-[14px] bg-[#cdd0d4] blur-[7px]"></div>
            <div class="absolute left-[474px] top-[12px] w-[127px] h-[14px] bg-[#c6c9ce] blur-[7px]"></div>
          </div>
          <div class="absolute left-[208px] top-[177px] w-[384px] h-[20px] overflow-hidden bg-[#e8eaec]">
            <div class="absolute left-0 top-[4px] w-[384px] h-[10px] bg-[#dcdfe3] blur-[5px]"></div>
          </div>
          <div class="absolute left-[200px] top-[233px] w-[168px] h-[94px] overflow-hidden bg-[#e6e8eb]">
            <div class="absolute left-[60px] top-[30px] w-[100px] h-[8px] bg-[#d8dbdf] blur-[4px]"></div>
            <div class="absolute left-[90px] top-[70px] w-[90px] h-[34px] bg-white/80 blur-[8px]"></div>
          </div>
          <div class="absolute left-[185px] top-[505px] w-[107px] h-[26px] overflow-hidden bg-gradient-to-r from-white via-[#eceeef] to-[#eef0f1]">
            <div class="absolute left-[15px] top-[9px] w-[80px] h-[9px] bg-[#c4c9ce] blur-[5px]"></div>
          </div>
          <div class="absolute left-[694px] top-[501px] w-[83px] h-[32px] overflow-hidden bg-gradient-to-r from-[#f0eef2] to-white">
            <div class="absolute left-[10px] top-[14px] w-[55px] h-[8px] bg-[#cfbcdc] blur-[4px]"></div>
          </div>
          <div class="absolute left-[622px] top-[651px] w-[104px] h-[24px] overflow-hidden bg-gradient-to-r from-white to-[#eef0f1]">
            <div class="absolute left-[18px] top-[10px] w-[80px] h-[8px] bg-[#c8cdd1] blur-[4px]"></div>
          </div>
          <div class="absolute left-[208px] top-[799px] w-[80px] h-[22px] bg-[#cfdde9]"></div>
          <div class="absolute left-[210px] top-[1037px] w-[152px] h-[48px] overflow-hidden bg-gradient-to-br from-[#e8eaec] to-white">
            <div class="absolute left-[10px] top-[30px] w-[90px] h-[10px] bg-[#d4d7db] blur-[5px]"></div>
          </div>
        </div>

        <!-- Numbered callouts -->
        <span class="absolute left-[106px] top-[435px] w-[44px] h-[44px] rounded-full bg-[#ff9800] text-white text-[24px] tracking-normal flex items-center justify-center pb-[2px]">1</span>
        <span class="absolute left-[104px] top-[589px] w-[44px] h-[44px] rounded-full bg-[#ff9800] text-white text-[24px] tracking-normal flex items-center justify-center">2</span>
        <span class="absolute left-[184px] top-[969px] w-[44px] h-[44px] rounded-full bg-[#ff9800] text-white text-[24px] tracking-normal flex items-center justify-center pb-[2px]">3</span>
      </div>
    </div>
  </body>
</html>
